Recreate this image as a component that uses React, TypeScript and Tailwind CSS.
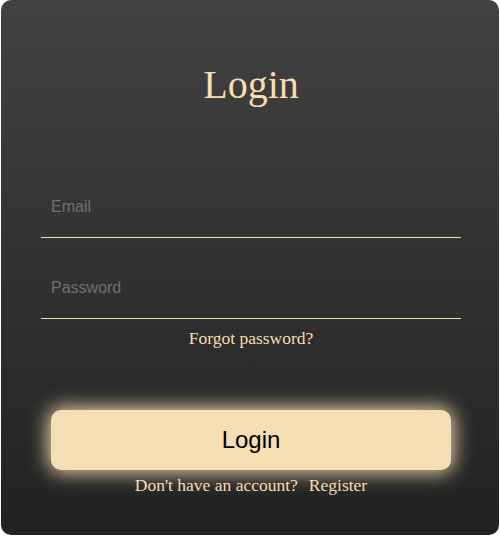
import { FC } from "react"

const serif = "font-['Liberation_Serif','Times_New_Roman',serif]"
const sans = "font-['Liberation_Sans',Arial,sans-serif]"

const Field: FC<{ type: string; placeholder: string }> = ({ type, placeholder }) => (
  <input
    type={type}
    placeholder={placeholder}
    className={`${sans} w-full bg-transparent px-[10px] pt-[21px] pb-[21px] text-base leading-[18px] text-[#f5deb3] placeholder:text-[#6f6f6f] border-b border-[#f5deb3] outline-none`}
  />
)

export default function App() {
  return (
    <div className="min-h-[536px] bg-white">
      <div className="mx-auto flex h-[535px] w-[498px] flex-col rounded-[10px] bg-gradient-to-b from-[#424242] to-[#222222] pl-10 pr-[38px]">
        <h1 className={`${serif} pt-[62px] text-center text-[40px] leading-[46px] text-[#f5deb3]`}>Login</h1>
        <form className="mt-[69px] flex flex-col gap-[20px]" onSubmit={(e) => e.preventDefault()}>
          <Field type="email" placeholder="Email" />
          <Field type="password" placeholder="Password" />
        </form>
        <a href="#" className={`${serif} mt-[9px] text-center text-[17.5px] leading-[20px] text-[#f5deb3]`}>
          Forgot password?
        </a>
        <button
          className={`${sans} mx-[10px] mt-[62px] h-[60px] rounded-[10px] bg-[#f5deb3] text-2xl text-black shadow-[0_0_20px_2px_#f5deb3]`}
        >
          Login
        </button>
        <p className={`${serif} mt-[5px] text-center text-[17.5px] leading-[20px] text-[#f5deb3]`}>
          Don't have an account?
          <a href="#" className="ml-[11px]">Register</a>
        </p>
      </div>
    </div>
  )
}
